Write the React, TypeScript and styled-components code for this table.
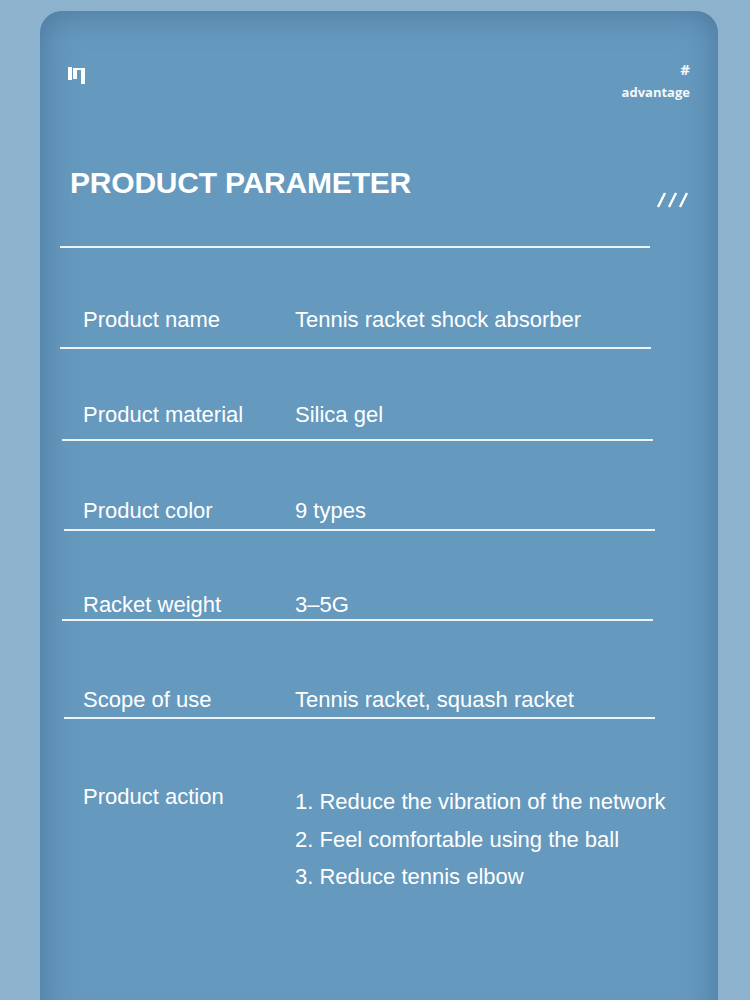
import React from "react";
import styled, { createGlobalStyle } from "styled-components";

const GlobalStyle = createGlobalStyle`
  html, body {
    margin: 0;
    padding: 0;
    height: 1000px;
    overflow: hidden;
    background: #8cb2ce;
  }
  body {
    font-family: "Liberation Sans", Arial, sans-serif;
  }
`;

const Page = styled.div`
  height: 1000px;
  padding-top: 11px;
  box-sizing: border-box;
`;

const Card = styled.div`
  margin-left: 40px;
  width: 678px;
  height: 1020px;
  box-sizing: border-box;
  padding: 50px 28px 0 20px;
  border-radius: 22px 22px 0 0;
  background: #6699be;
  box-shadow: inset 0 0 34px rgba(50, 90, 125, 0.55);
  color: #ffffff;
`;

const TopBar = styled.div`
  display: flex;
  justify-content: space-between;
  align-items: flex-start;
`;

const Mark = styled.svg`
  margin: 6px 0 0 8px;
`;

const Tag = styled.div`
  font-family: "Open Sans", "Noto Sans", sans-serif;
  font-weight: 700;
  font-size: 13px;
  line-height: 17px;
  text-align: right;
  color: #f4f8fb;
`;

const Hash = styled.div`
  font-size: 15px;
  line-height: 17px;
`;

const TagWord = styled.div`
  margin-top: 6px;
`;

const TitleRow = styled.div`
  display: flex;
  justify-content: space-between;
  align-items: flex-end;
  margin-top: 65px;
`;

const Title = styled.h1`
  margin: 0 0 0 10px;
  font-size: 30px;
  line-height: 34px;
  font-weight: 700;
  letter-spacing: -0.2px;
`;

const Slashes = styled.svg`
  margin-bottom: -8px;
`;

const Rule = styled.div`
  margin-top: 46px;
  width: 590px;
  height: 2px;
  background: #edf4f9;
`;

const Row = styled.div<{ $top: number; $bottom: number; $shift: number; $last?: boolean }>`
  display: grid;
  grid-template-columns: 212px 1fr;
  align-items: start;
  width: 591px;
  margin-left: ${(p) => p.$shift}px;
  padding: ${(p) => p.$top}px 0 ${(p) => p.$bottom}px ${(p) => 23 - p.$shift}px;
  box-sizing: border-box;
  border-bottom: ${(p) => (p.$last ? "none" : "2px solid #edf4f9")};
  font-size: 22px;
  line-height: 26px;
`;

const Label = styled.div``;

const Value = styled.div`
  white-space: nowrap;
`;

const ActionList = styled.ol`
  margin: -1px 0 0;
  padding: 0;
  list-style: none;
  line-height: 37.5px;
  white-space: nowrap;
`;

const rows = [
  { label: "Product name", value: "Tennis racket shock absorber", top: 59, bottom: 14, shift: 0 },
  { label: "Product material", value: "Silica gel", top: 53, bottom: 11, shift: 2 },
  { label: "Product color", value: "9 types", top: 57, bottom: 5, shift: 4 },
  { label: "Racket weight", value: "3–5G", top: 61, bottom: 1, shift: 2 },
  { label: "Scope of use", value: "Tennis racket, squash racket", top: 66, bottom: 4, shift: 4 },
];

const actions = [
  "1. Reduce the vibration of the network",
  "2. Feel comfortable using the ball",
  "3. Reduce tennis elbow",
];

const App: React.FC = () => {
  return (
    <>
      <GlobalStyle />
      <Page>
        <Card>
          <TopBar>
            <Mark width="18" height="17" viewBox="0 0 18 17">
              <rect x="0" y="0" width="4" height="13" fill="#fff" />
              <rect x="5" y="1" width="4" height="11" fill="#fff" />
              <rect x="8" y="1" width="6" height="2" fill="#fff" />
              <rect x="13" y="1" width="4" height="16" fill="#fff" />
            </Mark>
            <Tag>
              <Hash>#</Hash>
              <TagWord>advantage</TagWord>
            </Tag>
          </TopBar>

          <TitleRow>
            <Title>PRODUCT PARAMETER</Title>
            <Slashes width="34" height="16" viewBox="0 0 34 16">
              <line x1="2" y1="15" x2="9" y2="1" stroke="#fff" strokeWidth="2.4" />
              <line x1="13" y1="15" x2="20" y2="1" stroke="#fff" strokeWidth="2.4" />
              <line x1="24" y1="15" x2="31" y2="1" stroke="#fff" strokeWidth="2.4" />
            </Slashes>
          </TitleRow>

          <Rule />

          {rows.map((r) => (
            <Row key={r.label} $top={r.top} $bottom={r.bottom} $shift={r.shift}>
              <Label>{r.label}</Label>
              <Value>{r.value}</Value>
            </Row>
          ))}

          <Row $top={65} $bottom={0} $shift={0} $last>
            <Label>Product action</Label>
            <ActionList>
              {actions.map((a) => (
                <li key={a}>{a}</li>
              ))}
            </ActionList>
          </Row>
        </Card>
      </Page>
    </>
  );
};

export default App;
